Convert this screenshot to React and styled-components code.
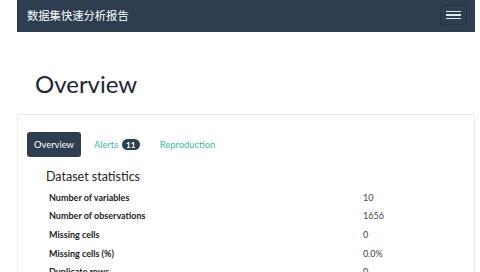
import React from 'react'
import styled, { createGlobalStyle } from 'styled-components'

const GlobalStyle = createGlobalStyle`
  html, body {
    margin: 0;
    padding: 0;
    background: #fff;
    overflow: hidden;
  }
  body {
    font-family: Lato, "Noto Sans CJK SC", sans-serif;
    color: #212529;
  }
`

const stats = [
  ['Number of variables', '10'],
  ['Number of observations', '1656'],
  ['Missing cells', '0'],
  ['Missing cells (%)', '0.0%'],
  ['Duplicate rows', '0'],
]

function App() {
  return (
    <>
      <GlobalStyle />
      <Page>
        <Navbar>
          <Brand>数据集快速分析报告</Brand>
          <Toggler aria-label="menu">
            <Bar />
            <Bar />
            <Bar />
          </Toggler>
        </Navbar>
        <Title>Overview</Title>
        <Card>
          <Tabs>
            <Tab active>Overview</Tab>
            <Tab>
              Alerts <Badge>11</Badge>
            </Tab>
            <Tab>Reproduction</Tab>
          </Tabs>
          <Section>
            <SectionTitle>Dataset statistics</SectionTitle>
            <StatsTable>
              {stats.map(([label, value]) => (
                <Row key={label}>
                  <Label>{label}</Label>
                  <Value>{value}</Value>
                </Row>
              ))}
            </StatsTable>
          </Section>
        </Card>
      </Page>
    </>
  )
}

const Page = styled.div`
  margin-left: 17px;
  width: 458px;
  height: 272px;
  overflow: hidden;
`

const Navbar = styled.nav`
  height: 32px;
  background: #2c3e50;
  display: flex;
  align-items: center;
  justify-content: space-between;
  padding: 0 8px 0 10px;
  box-sizing: border-box;
`

const Brand = styled.span`
  color: #fff;
  font-family: Lato, "Noto Sans CJK SC", sans-serif;
  font-size: 11.3px;
  line-height: 1;
  margin-top: -1px;
`

const Toggler = styled.button`
  width: 27px;
  height: 20px;
  margin-top: -2px;
  border: 1px solid rgba(0, 0, 0, 0.18);
  border-radius: 3px;
  background: transparent;
  display: flex;
  flex-direction: column;
  align-items: center;
  justify-content: center;
  gap: 2px;
  padding: 0;
`

const Bar = styled.span`
  display: block;
  width: 15px;
  height: 1.5px;
  background: #e4e9ef;
`

const Title = styled.h1`
  margin: 0;
  padding: 37px 0 0 18px;
  height: 82px;
  box-sizing: border-box;
  font-size: 24px;
  font-weight: 400;
  line-height: 29px;
  color: #1c2634;
`

const Card = styled.div`
  border: 1px solid #ececec;
  border-bottom: none;
  border-radius: 2px 2px 0 0;
  padding: 17px 9px 0;
  height: 200px;
`

const Tabs = styled.div`
  display: flex;
  gap: 6px;
`

const Tab = styled.div`
  height: 25px;
  display: flex;
  align-items: center;
  padding: 0 7px;
  border-radius: 3px;
  font-size: 9.4px;
  background: ${(p) => (p.active ? '#2c3e50' : 'transparent')};
  color: ${(p) => (p.active ? '#fff' : '#3fb8a0')};
  white-space: pre;
`

const Badge = styled.span`
  display: inline-flex;
  align-items: center;
  justify-content: center;
  width: 18px;
  height: 11px;
  border-radius: 6px;
  background: #2c3e50;
  color: #fff;
  font-size: 8px;
  font-weight: 700;
  margin-left: 1px;
`

const Section = styled.div`
  padding: 12px 0 0 19px;
`

const SectionTitle = styled.h4`
  margin: 0 0 3px;
  font-size: 12.5px;
  font-weight: 400;
  line-height: 16px;
  color: #212529;
`

const StatsTable = styled.div`
  display: flex;
  flex-direction: column;
  padding-left: 3px;
`

const Row = styled.div`
  display: grid;
  grid-template-columns: 314px 1fr;
  height: 18.6px;
  align-items: center;
  font-size: 9px;
`

const Label = styled.span`
  font-weight: 700;
  color: #222;
`

const Value = styled.span`
  color: #444;
`

export default App
